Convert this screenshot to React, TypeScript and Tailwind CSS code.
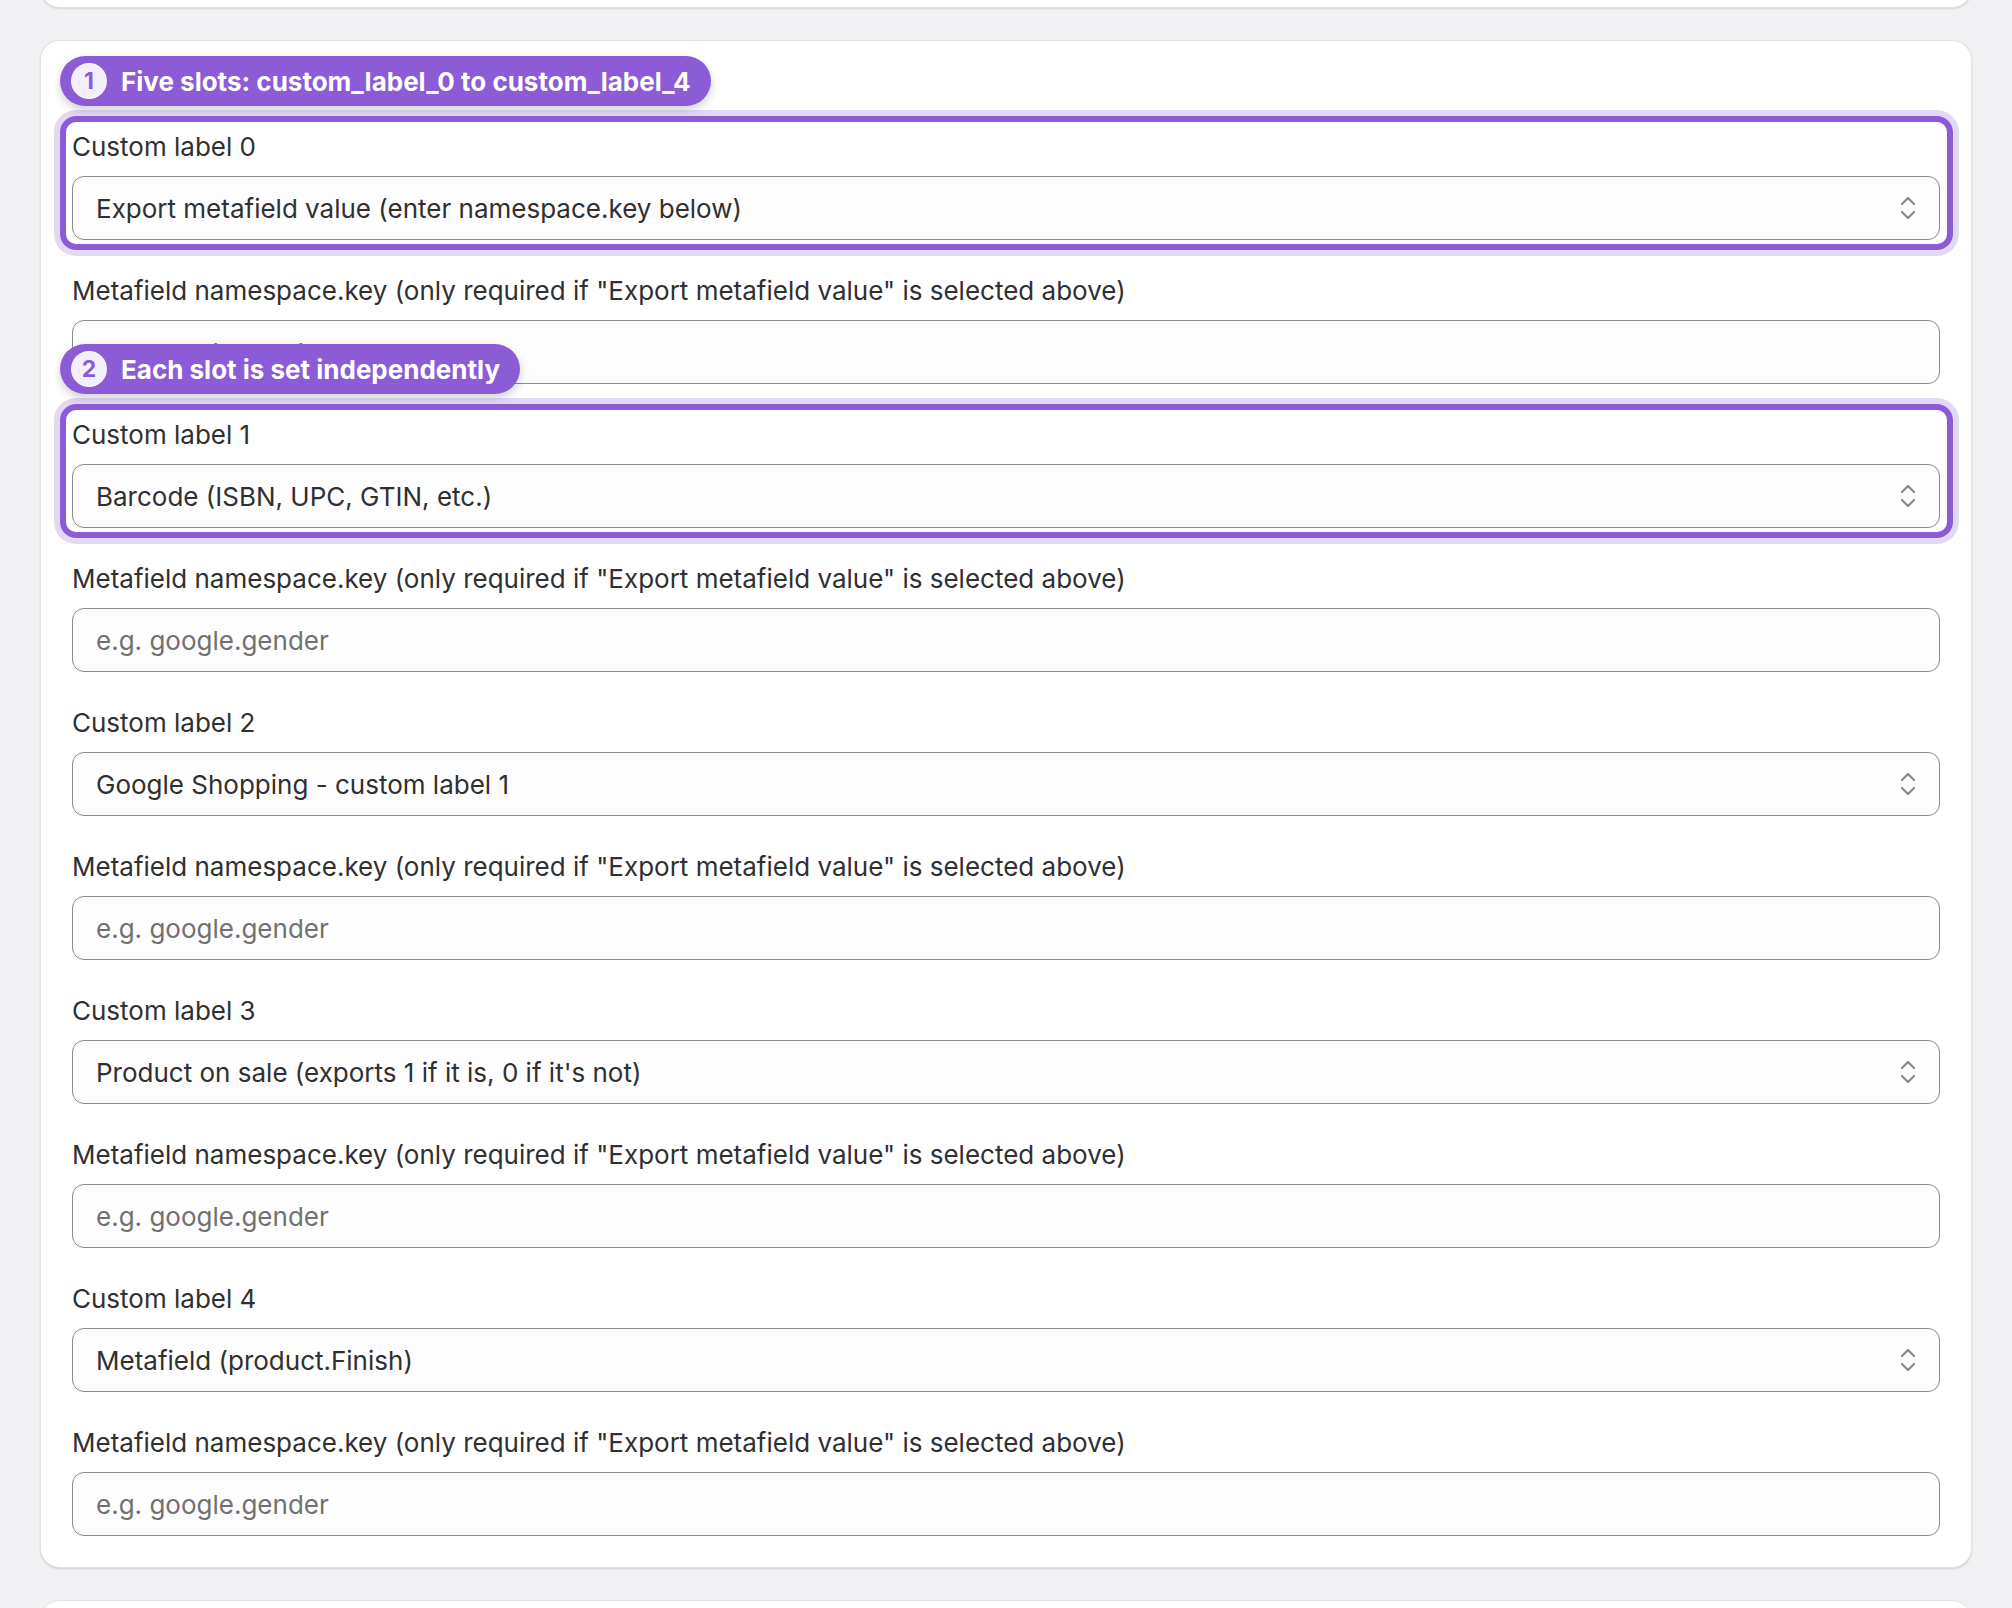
import React from "react";

function Chevrons() {
  return (
    <svg width="16" height="24" viewBox="0 0 16 24" fill="none" stroke="#8a8a8a" strokeWidth="2.2" strokeLinecap="round" strokeLinejoin="round">
      <polyline points="2,8 8,2 14,8" />
      <polyline points="2,16 8,22 14,16" />
    </svg>
  );
}

function Select({ value }: { value: string }) {
  return (
    <div className="flex h-[64px] items-center justify-between rounded-[12px] border border-[#8a8a8a] bg-[#fdfdfd] pl-[23px] pr-[23px]">
      <span className="text-[26px] text-[#303030]">{value}</span>
      <Chevrons />
    </div>
  );
}

function Input() {
  return (
    <div className="flex h-[64px] items-center rounded-[12px] border border-[#8a8a8a] bg-[#fdfdfd] pl-[23px]">
      <span className="text-[26px] text-[#717171]">e.g. google.gender</span>
    </div>
  );
}

function Badge({ n, text }: { n: number; text: string }) {
  return (
    <div className="absolute left-[-12px] top-[-73px] z-20 flex h-[50px] items-center gap-[14px] rounded-full bg-[#8c5bd6] pl-[11px] pr-[20px] shadow-[0_4px_10px_rgba(0,0,0,0.18)]">
      <div className="flex h-[36px] w-[36px] items-center justify-center rounded-full bg-[#f4effd] text-[23px] font-bold text-[#8c5bd6]">
        {n}
      </div>
      <span className="whitespace-nowrap text-[26px] font-bold text-white">{text}</span>
    </div>
  );
}

function Field({
  label,
  children,
  highlight,
  badge,
}: {
  label: string;
  children: React.ReactNode;
  highlight?: boolean;
  badge?: React.ReactNode;
}) {
  return (
    <div className="relative">
      {highlight && (
        <div className="pointer-events-none absolute -bottom-[10px] -left-[12px] -right-[13px] -top-[13px] z-10 rounded-[16px] border-[6px] border-[#8c5bd6] shadow-[0_0_0_6px_#e3d8f6]" />
      )}
      {badge}
      <div className="text-[26px] leading-[36px] text-[#303030]">{label}</div>
      <div className="mt-[11px]">{children}</div>
    </div>
  );
}

const META = 'Metafield namespace.key (only required if "Export metafield value" is selected above)';

export default function App() {
  const groups = [
    { label: "Custom label 0", value: "Export metafield value (enter namespace.key below)", badge: "Five slots: custom_label_0 to custom_label_4" },
    { label: "Custom label 1", value: "Barcode (ISBN, UPC, GTIN, etc.)", badge: "Each slot is set independently" },
    { label: "Custom label 2", value: "Google Shopping - custom label 1" },
    { label: "Custom label 3", value: "Product on sale (exports 1 if it is, 0 if it's not)" },
    { label: "Custom label 4", value: "Metafield (product.Finish)" },
  ];
  return (
    <div
      className="h-[1608px] w-full overflow-hidden bg-[#f1f1f3]"
      style={{ fontFamily: "Inter, 'Noto Sans', sans-serif" }}
    >
      <div className="flex flex-col gap-[32px] px-[40px]">
        <div className="-mt-[92px] h-[100px] rounded-[20px] border border-[#e3e3e3] bg-white shadow-[0_1px_2px_rgba(0,0,0,0.12)]" />
        <div className="flex flex-col gap-[33px] rounded-[20px] border border-[#e3e3e3] bg-white px-[31px] pb-[31px] pt-[88px] shadow-[0_1px_2px_rgba(0,0,0,0.14)]">
          {groups.map((g, i) => (
            <React.Fragment key={i}>
              <Field
                label={g.label}
                highlight={!!g.badge}
                badge={g.badge ? <Badge n={i + 1} text={g.badge} /> : undefined}
              >
                <Select value={g.value} />
              </Field>
              <Field label={META}>
                <Input />
              </Field>
            </React.Fragment>
          ))}
        </div>
        <div className="h-[100px] rounded-[20px] border border-[#e3e3e3] bg-white" />
      </div>
    </div>
  );
}
